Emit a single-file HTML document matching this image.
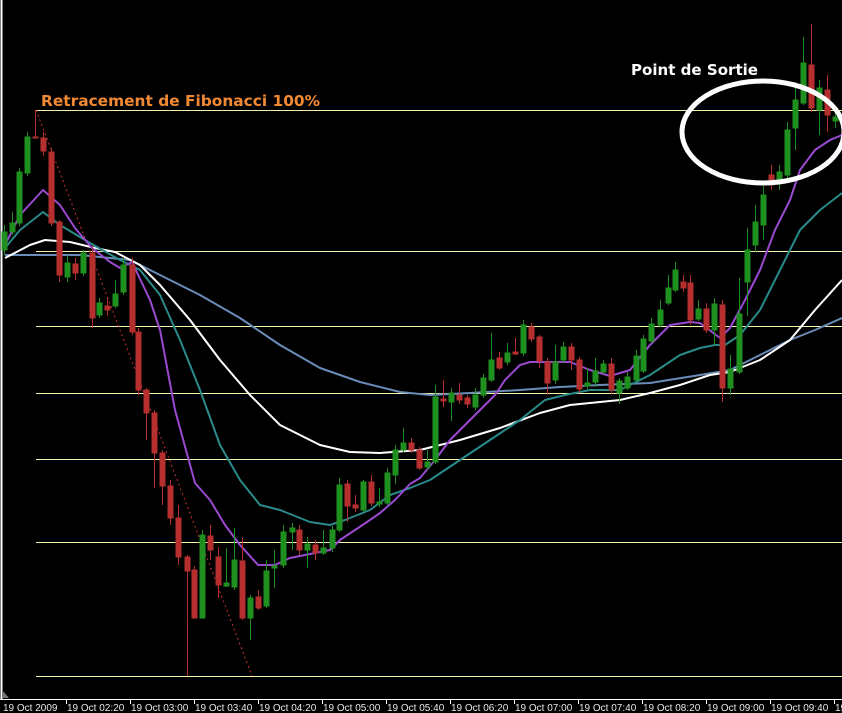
<!DOCTYPE html>
<html><head><meta charset="utf-8"><style>
html,body{margin:0;padding:0;background:#000;}
svg{display:block}
text{font-family:"Liberation Sans",sans-serif}
</style></head><body>
<svg width="842" height="713" viewBox="0 0 842 713" xmlns="http://www.w3.org/2000/svg">
<rect width="842" height="713" fill="#000"/>
<line x1="1.5" y1="0" x2="1.5" y2="699" stroke="#fff" stroke-width="2"/>
<line x1="0" y1="699.5" x2="842" y2="699.5" stroke="#fff" stroke-width="1"/>
<g stroke="#f2f2a8" stroke-width="1">
<line x1="36" y1="110.5" x2="842" y2="110.5"/>
<line x1="36" y1="251.5" x2="842" y2="251.5"/>
<line x1="36" y1="326.5" x2="842" y2="326.5"/>
<line x1="36" y1="393.5" x2="842" y2="393.5"/>
<line x1="36" y1="459.5" x2="842" y2="459.5"/>
<line x1="36" y1="542.5" x2="842" y2="542.5"/>
<line x1="36" y1="676.5" x2="842" y2="676.5"/>
</g>
<line x1="36" y1="110" x2="252" y2="676" stroke="#c83030" stroke-width="1" stroke-dasharray="2,3"/>
<g fill="none" stroke-width="2" stroke-linejoin="round">
<polyline stroke="#6a8cb8" points="5,255 40,255 80,255 110,258 130,260 160,275 200,295 240,318 280,345 320,368 360,382 400,392 430,395 470,393 520,390 560,387 600,385 650,383 700,375 730,370 760,355 790,340 815,330 842,318"/>
<polyline stroke="#ffffff" points="5,258 30,245 45,240 70,242 95,248 115,252 140,265 160,285 190,320 220,360 250,395 280,425 320,445 350,452 380,453 420,450 460,440 500,428 540,413 570,405 620,400 650,393 680,385 710,375 730,372 760,360 790,340 815,310 842,280"/>
<polyline stroke="#2a8a8a" points="5,248 20,230 43,212 60,225 90,243 120,260 140,270 160,295 180,340 200,390 220,445 240,480 260,505 280,510 310,522 330,525 345,520 370,510 390,495 410,488 430,480 460,460 490,440 520,420 545,400 565,395 590,390 620,390 650,375 680,355 700,348 715,345 725,345 740,335 760,310 780,270 800,230 820,210 842,193"/>
<polyline stroke="#9a4ad0" points="5,245 20,215 43,190 60,205 75,228 92,248 110,262 120,268 132,262 150,300 160,330 175,410 195,483 210,500 225,525 240,545 258,565 275,565 290,558 315,553 330,550 340,540 355,530 370,520 380,513 395,500 410,484 420,478 435,460 450,440 465,425 480,410 495,395 505,380 520,365 530,362 545,362 570,362 590,370 610,376 630,370 650,345 670,325 690,322 700,323 720,338 730,328 745,300 760,270 775,230 790,200 800,170 815,150 830,140 842,135"/>
</g>
<g fill="#1f8f1f" stroke="#1f8f1f" stroke-width="1">
<line x1="4.5" y1="225" x2="4.5" y2="255"/><rect x="2" y="232" width="5" height="18"/>
<line x1="12.5" y1="212" x2="12.5" y2="235"/><rect x="10" y="223" width="5" height="9"/>
<line x1="19.5" y1="168" x2="19.5" y2="226"/><rect x="17" y="172" width="5" height="51"/>
<line x1="27.5" y1="132" x2="27.5" y2="176"/><rect x="25" y="137" width="5" height="36"/>
<line x1="67.5" y1="255" x2="67.5" y2="282"/><rect x="65" y="263" width="5" height="14"/>
<line x1="83.5" y1="250" x2="83.5" y2="276"/><rect x="81" y="253" width="5" height="20"/>
<line x1="99.5" y1="298" x2="99.5" y2="318"/><rect x="97" y="303" width="5" height="12"/>
<line x1="115.5" y1="280" x2="115.5" y2="308"/><rect x="113" y="294" width="5" height="12"/>
<line x1="123.5" y1="258" x2="123.5" y2="295"/><rect x="121" y="265" width="5" height="27"/>
<line x1="202.5" y1="530" x2="202.5" y2="618"/><rect x="200" y="535" width="5" height="83"/>
<line x1="226.5" y1="548" x2="226.5" y2="587"/><rect x="224" y="583" width="5" height="3"/>
<line x1="234.5" y1="528" x2="234.5" y2="590"/><rect x="232" y="560" width="5" height="27"/>
<line x1="250.5" y1="595" x2="250.5" y2="640"/><rect x="248" y="598" width="5" height="20"/>
<line x1="266.5" y1="560" x2="266.5" y2="608"/><rect x="264" y="571" width="5" height="35"/>
<line x1="274.5" y1="550" x2="274.5" y2="588"/><rect x="272" y="566" width="5" height="2"/>
<line x1="283.5" y1="525" x2="283.5" y2="568"/><rect x="281" y="532" width="5" height="33"/>
<line x1="292.5" y1="523" x2="292.5" y2="550"/><rect x="290" y="528" width="5" height="4"/>
<line x1="307.5" y1="537" x2="307.5" y2="568"/><rect x="305" y="544" width="5" height="6"/>
<line x1="323.5" y1="530" x2="323.5" y2="555"/><rect x="321" y="548" width="5" height="5"/>
<line x1="332.5" y1="526" x2="332.5" y2="552"/><rect x="330" y="530" width="5" height="18"/>
<line x1="339.5" y1="478" x2="339.5" y2="532"/><rect x="337" y="485" width="5" height="45"/>
<line x1="363.5" y1="480" x2="363.5" y2="512"/><rect x="361" y="482" width="5" height="28"/>
<line x1="379.5" y1="488" x2="379.5" y2="507"/><rect x="377" y="502" width="5" height="2"/>
<line x1="387.5" y1="468" x2="387.5" y2="505"/><rect x="385" y="473" width="5" height="30"/>
<line x1="395.5" y1="445" x2="395.5" y2="484"/><rect x="393" y="450" width="5" height="25"/>
<line x1="403.5" y1="428" x2="403.5" y2="452"/><rect x="401" y="443" width="5" height="7"/>
<line x1="427.5" y1="450" x2="427.5" y2="470"/><rect x="425" y="462" width="5" height="5"/>
<line x1="435.5" y1="385" x2="435.5" y2="464"/><rect x="433" y="397" width="5" height="65"/>
<line x1="451.5" y1="388" x2="451.5" y2="421"/><rect x="449" y="393" width="5" height="9"/>
<line x1="475.5" y1="388" x2="475.5" y2="410"/><rect x="473" y="395" width="5" height="12"/>
<line x1="483.5" y1="374" x2="483.5" y2="398"/><rect x="481" y="378" width="5" height="17"/>
<line x1="491.5" y1="333" x2="491.5" y2="382"/><rect x="489" y="360" width="5" height="20"/>
<line x1="507.5" y1="343" x2="507.5" y2="365"/><rect x="505" y="353" width="5" height="9"/>
<line x1="523.5" y1="320" x2="523.5" y2="356"/><rect x="521" y="325" width="5" height="28"/>
<line x1="555.5" y1="345" x2="555.5" y2="384"/><rect x="553" y="362" width="5" height="18"/>
<line x1="563.5" y1="342" x2="563.5" y2="363"/><rect x="561" y="347" width="5" height="13"/>
<line x1="587.5" y1="368" x2="587.5" y2="389"/><rect x="585" y="383" width="5" height="3"/>
<line x1="595.5" y1="358" x2="595.5" y2="387"/><rect x="593" y="371" width="5" height="11"/>
<line x1="603.5" y1="360" x2="603.5" y2="374"/><rect x="601" y="364" width="5" height="8"/>
<line x1="619.5" y1="378" x2="619.5" y2="404"/><rect x="617" y="381" width="5" height="12"/>
<line x1="627.5" y1="372" x2="627.5" y2="390"/><rect x="625" y="377" width="5" height="11"/>
<line x1="636.5" y1="350" x2="636.5" y2="382"/><rect x="634" y="356" width="5" height="24"/>
<line x1="643.5" y1="335" x2="643.5" y2="373"/><rect x="641" y="339" width="5" height="32"/>
<line x1="651.5" y1="318" x2="651.5" y2="343"/><rect x="649" y="324" width="5" height="17"/>
<line x1="660.5" y1="300" x2="660.5" y2="327"/><rect x="658" y="310" width="5" height="15"/>
<line x1="668.5" y1="275" x2="668.5" y2="305"/><rect x="666" y="288" width="5" height="15"/>
<line x1="675.5" y1="262" x2="675.5" y2="292"/><rect x="673" y="270" width="5" height="20"/>
<line x1="698.5" y1="300" x2="698.5" y2="321"/><rect x="696" y="309" width="5" height="10"/>
<line x1="714.5" y1="298" x2="714.5" y2="345"/><rect x="712" y="304" width="5" height="26"/>
<line x1="730.5" y1="355" x2="730.5" y2="395"/><rect x="728" y="369" width="5" height="19"/>
<line x1="739.5" y1="278" x2="739.5" y2="374"/><rect x="737" y="314" width="5" height="58"/>
<line x1="747.5" y1="228" x2="747.5" y2="316"/><rect x="745" y="250" width="5" height="32"/>
<line x1="755.5" y1="205" x2="755.5" y2="252"/><rect x="753" y="222" width="5" height="23"/>
<line x1="763.5" y1="185" x2="763.5" y2="240"/><rect x="761" y="195" width="5" height="30"/>
<line x1="779.5" y1="165" x2="779.5" y2="190"/><rect x="777" y="172" width="5" height="8"/>
<line x1="787.5" y1="122" x2="787.5" y2="182"/><rect x="785" y="130" width="5" height="45"/>
<line x1="795.5" y1="82" x2="795.5" y2="150"/><rect x="793" y="100" width="5" height="28"/>
<line x1="803.5" y1="37" x2="803.5" y2="105"/><rect x="801" y="63" width="5" height="40"/>
<line x1="819.5" y1="80" x2="819.5" y2="135"/><rect x="817" y="88" width="5" height="22"/>
<line x1="835.5" y1="110" x2="835.5" y2="128"/><rect x="833" y="117" width="5" height="4"/>
</g>
<g fill="#b52f2f" stroke="#b52f2f" stroke-width="1">
<line x1="35.5" y1="110" x2="35.5" y2="138"/><rect x="33" y="137" width="5" height="1"/>
<line x1="43.5" y1="132" x2="43.5" y2="156"/><rect x="41" y="138" width="5" height="13"/>
<line x1="51.5" y1="148" x2="51.5" y2="226"/><rect x="49" y="152" width="5" height="71"/>
<line x1="59.5" y1="220" x2="59.5" y2="282"/><rect x="57" y="222" width="5" height="53"/>
<line x1="75.5" y1="258" x2="75.5" y2="280"/><rect x="73" y="264" width="5" height="9"/>
<line x1="92.5" y1="246" x2="92.5" y2="328"/><rect x="90" y="253" width="5" height="65"/>
<line x1="107.5" y1="298" x2="107.5" y2="316"/><rect x="105" y="306" width="5" height="4"/>
<line x1="132.5" y1="258" x2="132.5" y2="335"/><rect x="130" y="265" width="5" height="67"/>
<line x1="138.5" y1="328" x2="138.5" y2="395"/><rect x="136" y="332" width="5" height="58"/>
<line x1="146.5" y1="388" x2="146.5" y2="440"/><rect x="144" y="390" width="5" height="23"/>
<line x1="154.5" y1="410" x2="154.5" y2="488"/><rect x="152" y="413" width="5" height="40"/>
<line x1="162.5" y1="450" x2="162.5" y2="505"/><rect x="160" y="453" width="5" height="33"/>
<line x1="170.5" y1="480" x2="170.5" y2="525"/><rect x="168" y="486" width="5" height="32"/>
<line x1="178.5" y1="505" x2="178.5" y2="565"/><rect x="176" y="518" width="5" height="39"/>
<line x1="187.5" y1="555" x2="187.5" y2="676"/><rect x="185" y="557" width="5" height="14"/>
<line x1="194.5" y1="566" x2="194.5" y2="618"/><rect x="192" y="570" width="5" height="48"/>
<line x1="210.5" y1="525" x2="210.5" y2="560"/><rect x="208" y="536" width="5" height="14"/>
<line x1="218.5" y1="547" x2="218.5" y2="598"/><rect x="216" y="557" width="5" height="28"/>
<line x1="242.5" y1="538" x2="242.5" y2="620"/><rect x="240" y="561" width="5" height="57"/>
<line x1="258.5" y1="590" x2="258.5" y2="610"/><rect x="256" y="597" width="5" height="11"/>
<line x1="299.5" y1="525" x2="299.5" y2="555"/><rect x="297" y="530" width="5" height="20"/>
<line x1="315.5" y1="540" x2="315.5" y2="560"/><rect x="313" y="545" width="5" height="8"/>
<line x1="347.5" y1="480" x2="347.5" y2="522"/><rect x="345" y="484" width="5" height="22"/>
<line x1="355.5" y1="495" x2="355.5" y2="512"/><rect x="353" y="505" width="5" height="3"/>
<line x1="371.5" y1="475" x2="371.5" y2="506"/><rect x="369" y="482" width="5" height="21"/>
<line x1="411.5" y1="438" x2="411.5" y2="453"/><rect x="409" y="443" width="5" height="7"/>
<line x1="419.5" y1="447" x2="419.5" y2="470"/><rect x="417" y="450" width="5" height="18"/>
<line x1="443.5" y1="380" x2="443.5" y2="407"/><rect x="441" y="399" width="5" height="2"/>
<line x1="459.5" y1="383" x2="459.5" y2="404"/><rect x="457" y="395" width="5" height="5"/>
<line x1="467.5" y1="395" x2="467.5" y2="408"/><rect x="465" y="398" width="5" height="6"/>
<line x1="499.5" y1="352" x2="499.5" y2="370"/><rect x="497" y="358" width="5" height="10"/>
<line x1="515.5" y1="338" x2="515.5" y2="355"/><rect x="513" y="352" width="5" height="2"/>
<line x1="531.5" y1="323" x2="531.5" y2="342"/><rect x="529" y="327" width="5" height="12"/>
<line x1="539.5" y1="335" x2="539.5" y2="368"/><rect x="537" y="337" width="5" height="24"/>
<line x1="547.5" y1="358" x2="547.5" y2="395"/><rect x="545" y="362" width="5" height="21"/>
<line x1="571.5" y1="343" x2="571.5" y2="370"/><rect x="569" y="347" width="5" height="13"/>
<line x1="579.5" y1="357" x2="579.5" y2="393"/><rect x="577" y="360" width="5" height="29"/>
<line x1="611.5" y1="358" x2="611.5" y2="394"/><rect x="609" y="364" width="5" height="26"/>
<line x1="683.5" y1="275" x2="683.5" y2="292"/><rect x="681" y="282" width="5" height="6"/>
<line x1="690.5" y1="275" x2="690.5" y2="325"/><rect x="688" y="283" width="5" height="37"/>
<line x1="706.5" y1="303" x2="706.5" y2="333"/><rect x="704" y="309" width="5" height="21"/>
<line x1="722.5" y1="300" x2="722.5" y2="402"/><rect x="720" y="305" width="5" height="83"/>
<line x1="771.5" y1="165" x2="771.5" y2="190"/><rect x="769" y="175" width="5" height="10"/>
<line x1="811.5" y1="24" x2="811.5" y2="112"/><rect x="809" y="65" width="5" height="43"/>
<line x1="827.5" y1="75" x2="827.5" y2="132"/><rect x="825" y="90" width="5" height="25"/>
</g>
<ellipse cx="763" cy="132" rx="81" ry="51" fill="none" stroke="#fff" stroke-width="5"/>
<text x="41" y="106" fill="#f28a35" font-size="15" font-weight="bold" style="font-family:'DejaVu Sans',sans-serif" textLength="279" lengthAdjust="spacingAndGlyphs">Retracement de Fibonacci 100%</text>
<text x="631" y="75" fill="#fff" font-size="15" font-weight="bold" style="font-family:'DejaVu Sans',sans-serif" textLength="127" lengthAdjust="spacingAndGlyphs">Point de Sortie</text>
<polygon points="2,690 2,698 9,698" fill="#777"/>
<g stroke="#fff" stroke-width="1">
<line x1="66.5" y1="699" x2="66.5" y2="704"/><line x1="130.5" y1="699" x2="130.5" y2="704"/>
<line x1="194.5" y1="699" x2="194.5" y2="704"/><line x1="258.5" y1="699" x2="258.5" y2="704"/>
<line x1="322.5" y1="699" x2="322.5" y2="704"/><line x1="386.5" y1="699" x2="386.5" y2="704"/>
<line x1="450.5" y1="699" x2="450.5" y2="704"/><line x1="514.5" y1="699" x2="514.5" y2="704"/>
<line x1="578.5" y1="699" x2="578.5" y2="704"/><line x1="642.5" y1="699" x2="642.5" y2="704"/>
<line x1="706.5" y1="699" x2="706.5" y2="704"/><line x1="770.5" y1="699" x2="770.5" y2="704"/>
<line x1="834.5" y1="699" x2="834.5" y2="704"/>
</g>
<g fill="#e8e8e8" font-size="10">
<text x="3" y="711">19 Oct 2009</text>
<text x="67" y="711">19 Oct 02:20</text>
<text x="131" y="711">19 Oct 03:00</text>
<text x="195" y="711">19 Oct 03:40</text>
<text x="259" y="711">19 Oct 04:20</text>
<text x="323" y="711">19 Oct 05:00</text>
<text x="387" y="711">19 Oct 05:40</text>
<text x="451" y="711">19 Oct 06:20</text>
<text x="515" y="711">19 Oct 07:00</text>
<text x="579" y="711">19 Oct 07:40</text>
<text x="643" y="711">19 Oct 08:20</text>
<text x="707" y="711">19 Oct 09:00</text>
<text x="771" y="711">19 Oct 09:40</text>
<text x="835" y="711">19</text>
</g>
</svg>
</body></html>
